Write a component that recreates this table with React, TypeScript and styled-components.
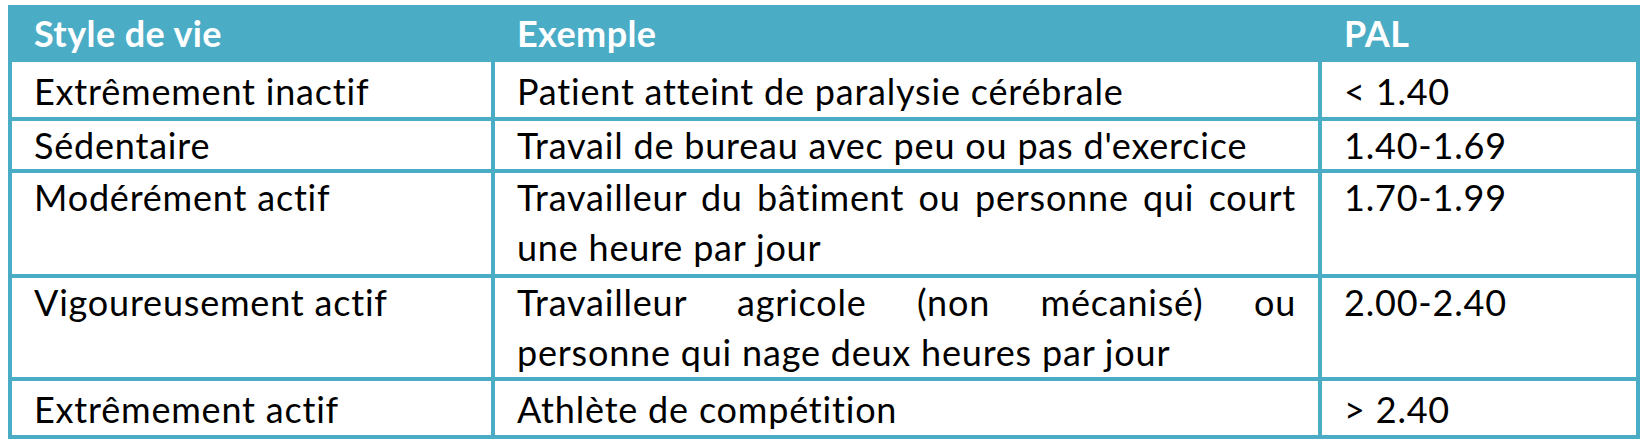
import React from "react";
import styled, { createGlobalStyle } from "styled-components";

const accent = "#4bacc6";

const GlobalStyle = createGlobalStyle`
  html, body {
    margin: 0;
    padding: 0;
    background: #ffffff;
  }
  body {
    font-family: Lato, "Open Sans", "Liberation Sans", sans-serif;
  }
`;

const Page = styled.div`
  padding: 5px 0 0 8px;
`;

const Table = styled.div`
  box-sizing: border-box;
  width: 1632px;
  display: grid;
  grid-template-columns: 479px 823px 1fr;
  column-gap: 4px;
  row-gap: 4px;
  background: ${accent};
  border: 4px solid ${accent};
  font-size: 36px;
  letter-spacing: 0.8px;
  line-height: 47px;
  color: #000;
`;

const HeadCell = styled.div`
  background: ${accent};
  color: #fff;
  font-weight: 700;
  letter-spacing: 0.4px;
  padding: 1px 22px 0;
  height: 48px;
`;

const Cell = styled.div<{ $top?: number; $bottom?: number }>`
  background: #fff;
  padding: ${(p) => p.$top ?? 1}px 22px ${(p) => p.$bottom ?? 0}px;
`;

const Line = styled.div<{ $justify?: boolean }>`
  white-space: nowrap;
  ${(p) =>
    p.$justify &&
    `
    text-align: justify;
    text-align-last: justify;
  `}

  & + & {
    margin-top: 3px;
  }
`;

type Row = {
  style: string;
  example: string[];
  pal: string;
  top?: number;
  bottom?: number;
};

const rows: Row[] = [
  {
    style: "Extrêmement inactif",
    example: ["Patient atteint de paralysie cérébrale"],
    pal: "< 1.40",
    top: 6,
    bottom: 2,
  },
  {
    style: "Sédentaire",
    example: ["Travail de bureau avec peu ou pas d'exercice"],
    pal: "1.40-1.69",
  },
  {
    style: "Modérément actif",
    example: [
      "Travailleur du bâtiment ou personne qui court",
      "une heure par jour",
    ],
    pal: "1.70-1.99",
    bottom: 3,
  },
  {
    style: "Vigoureusement actif",
    example: [
      "Travailleur agricole (non mécanisé) ou",
      "personne qui nage deux heures par jour",
    ],
    pal: "2.00-2.40",
    bottom: 1,
  },
  {
    style: "Extrêmement actif",
    example: ["Athlète de compétition"],
    pal: "> 2.40",
    top: 5,
    bottom: 2,
  },
];

export default function App() {
  return (
    <>
      <GlobalStyle />
      <Page>
        <Table>
          <HeadCell>Style de vie</HeadCell>
          <HeadCell>Exemple</HeadCell>
          <HeadCell>PAL</HeadCell>
          {rows.map((r) => (
            <React.Fragment key={r.style + r.pal}>
              <Cell $top={r.top} $bottom={r.bottom}>
                {r.style}
              </Cell>
              <Cell $top={r.top} $bottom={r.bottom}>
                {r.example.map((line, i) => (
                  <Line
                    key={line}
                    $justify={r.example.length > 1 && i < r.example.length - 1}
                  >
                    {line}
                  </Line>
                ))}
              </Cell>
              <Cell $top={r.top} $bottom={r.bottom}>
                {r.pal}
              </Cell>
            </React.Fragment>
          ))}
        </Table>
      </Page>
    </>
  );
}
